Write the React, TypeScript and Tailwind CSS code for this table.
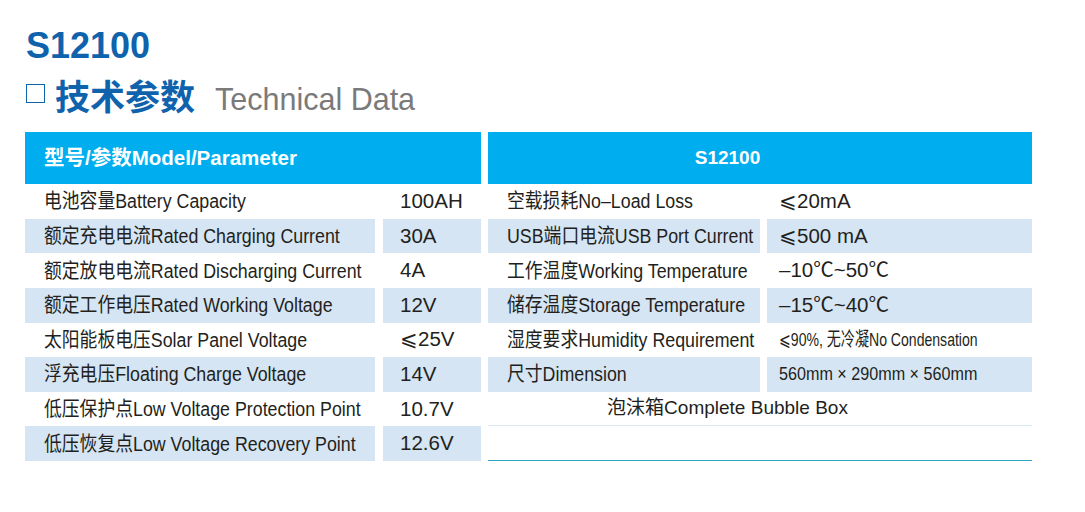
const leftRows = [
  ["电池容量Battery Capacity", "100AH"],
  ["额定充电电流Rated Charging Current", "30A"],
  ["额定放电电流Rated Discharging Current", "4A"],
  ["额定工作电压Rated Working Voltage", "12V"],
  ["太阳能板电压Solar Panel Voltage", "⩽25V"],
  ["浮充电压Floating Charge Voltage", "14V"],
  ["低压保护点Low Voltage Protection Point", "10.7V"],
  ["低压恢复点Low Voltage Recovery Point", "12.6V"],
];

const rightRows = [
  ["空载损耗No–Load Loss", "⩽20mA", ""],
  ["USB端口电流USB Port Current", "⩽500 mA", ""],
  ["工作温度Working Temperature", "–10℃~50℃", ""],
  ["储存温度Storage Temperature", "–15℃~40℃", ""],
  ["湿度要求Humidity Requirement", "⩽90%, 无冷凝No Condensation", "narrow"],
  ["尺寸Dimension", "560mm × 290mm × 560mm", "dim"],
];

const font = "font-['Liberation_Sans','Noto_Sans_CJK_SC',sans-serif]";

// labels in the source use a condensed face, so squeeze them a little
function Label({ text }: { text: string }) {
  return (
    <span className="inline-block origin-left scale-x-[0.89] text-[20px] leading-none whitespace-nowrap">
      {text}
    </span>
  );
}

export default function App() {
  return (
    <div className={`w-[1085px] h-[512px] bg-white ${font} text-[#231f20]`}>
      <div className="pl-[26px] pt-[28px]">
        <h1 className="text-[36px] leading-none font-bold text-[#0f63ad]">S12100</h1>
        <div className="flex items-baseline mt-[16px] h-[40px]">
          <span className="inline-block w-[19px] h-[19px] border-[1.5px] border-[#0f63ad] mr-[10px] self-start mt-[4px]" />
          <span className="text-[35px] leading-none font-bold text-[#0f63ad]">技术参数</span>
          <span className="ml-[20px] text-[30.5px] leading-none text-[#7a7a7a]">Technical Data</span>
        </div>
      </div>

      <div className="flex mt-[12px] pl-[25px] gap-[7px]">
        {/* left table */}
        <div className="w-[456px]">
          <div className="h-[52px] bg-[#00aeef] flex items-center pl-[19px] text-white font-bold text-[20.5px]">
            型号/参数Model/Parameter
          </div>
          {leftRows.map(([label, value], i) => (
            <div key={label} className="flex gap-[8px] h-[34.625px]">
              <div
                className={`w-[350px] flex items-center pl-[19px] ${
                  i % 2 ? "bg-[#d5e5f3]" : "bg-white"
                }`}
              >
                <Label text={label} />
              </div>
              <div
                className={`flex-1 flex items-center pl-[17px] text-[20.5px] ${
                  i % 2 ? "bg-[#d5e5f3]" : "bg-white"
                }`}
              >
                {value}
              </div>
            </div>
          ))}
        </div>

        {/* right table */}
        <div className="w-[544px]">
          <div className="h-[52px] bg-[#00aeef] flex items-center justify-center pr-[65px] text-white font-bold text-[19px]">
            S12100
          </div>
          {rightRows.map(([label, value, kind], i) => (
            <div key={label} className="flex gap-[7px] h-[34.625px]">
              <div
                className={`w-[272px] flex items-center pl-[19px] ${
                  i % 2 ? "bg-[#d5e5f3]" : "bg-white"
                }`}
              >
                <Label text={label} />
              </div>
              <div
                className={`flex-1 flex items-center pl-[12px] whitespace-nowrap ${
                  i % 2 ? "bg-[#d5e5f3]" : "bg-white"
                }`}
              >
                {kind === "narrow" ? (
                  <span className="inline-block origin-left scale-x-[0.74] text-[19px]">{value}</span>
                ) : kind === "dim" ? (
                  <span className="inline-block origin-left scale-x-[0.85] text-[19px]">{value}</span>
                ) : (
                  <span className="text-[20.5px]">{value}</span>
                )}
              </div>
            </div>
          ))}
          <div className="h-[34.625px] flex items-center justify-center pr-[65px] text-[19px] border-b border-[#dbe9f2]">
            泡沫箱Complete Bubble Box
          </div>
          <div className="h-[34.625px] border-b-[1.5px] border-[#2ea3c4]" />
        </div>
      </div>
    </div>
  );
}
